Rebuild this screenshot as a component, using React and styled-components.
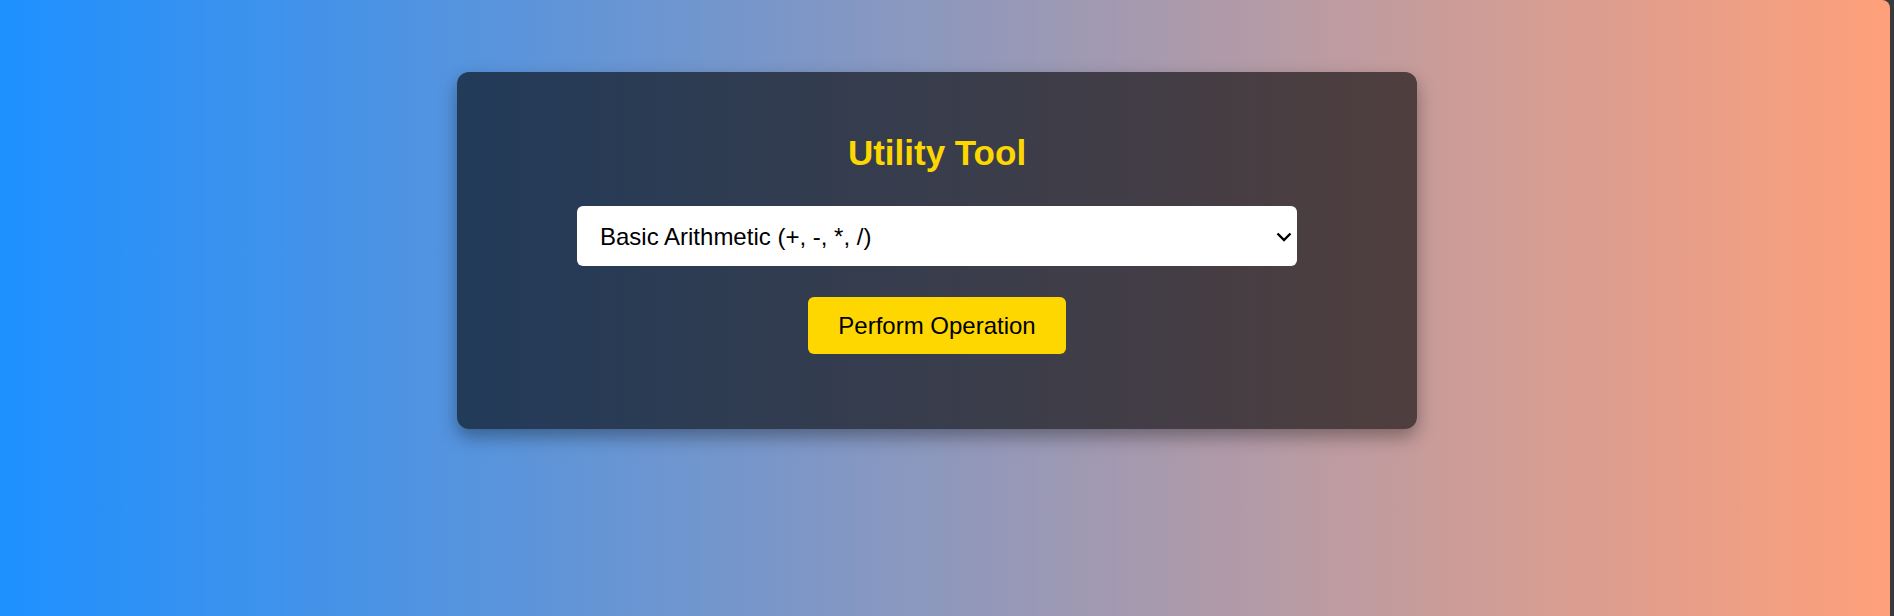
import React, { useState } from 'react'
import styled, { createGlobalStyle } from 'styled-components'

const GlobalStyle = createGlobalStyle`
  html, body {
    margin: 0;
    padding: 0;
    height: 100%;
    background: #3a3a3a;
  }
  #root {
    height: 100%;
  }
`

const Page = styled.div`
  box-sizing: border-box;
  width: calc(100% - 4px);
  min-height: 100%;
  padding: 72px 16px 0 0;
  display: flex;
  justify-content: center;
  align-items: flex-start;
  background: linear-gradient(to right, #1e90ff, #ffa07a);
  border-top-right-radius: 8px;
  font-family: 'Liberation Sans', Arial, sans-serif;
`

const Card = styled.div`
  box-sizing: border-box;
  width: 960px;
  padding: 62px 0 75px;
  display: flex;
  flex-direction: column;
  align-items: center;
  background: rgba(0, 0, 0, 0.6);
  border-radius: 12px;
  box-shadow: 0 8px 18px rgba(0, 0, 0, 0.35);
`

const Title = styled.h1`
  margin: 0 0 34px;
  font-size: 35px;
  line-height: 38px;
  font-weight: bold;
  color: #ffd700;
`

const SelectWrap = styled.div`
  position: relative;
  width: 720px;
  height: 60px;
`

const Select = styled.select`
  box-sizing: border-box;
  width: 100%;
  height: 100%;
  padding: 0 40px 0 23px;
  border: none;
  border-radius: 6px;
  background: #fff;
  color: #000;
  font-family: 'Liberation Sans', Arial, sans-serif;
  font-size: 24px;
  outline: none;
  appearance: none;
  -webkit-appearance: none;
`

const Chevron = styled.svg`
  position: absolute;
  right: 5px;
  top: 26px;
  pointer-events: none;
`

const ActionButton = styled.button`
  box-sizing: border-box;
  margin-top: 31px;
  height: 57px;
  padding: 0 30px;
  border: none;
  border-radius: 6px;
  background: #ffd700;
  color: #000;
  font-family: 'Liberation Sans', Arial, sans-serif;
  font-size: 24px;
  cursor: pointer;
`

const operations = [
  'Basic Arithmetic (+, -, *, /)',
  'Square Root',
  'Power',
  'Percentage',
]

export default function App() {
  const [op, setOp] = useState(operations[0])

  return (
    <>
      <GlobalStyle />
      <Page>
        <Card>
          <Title>Utility Tool</Title>
          <SelectWrap>
            <Select value={op} onChange={e => setOp(e.target.value)}>
              {operations.map(o => (
                <option key={o} value={o}>{o}</option>
              ))}
            </Select>
            <Chevron width="16" height="10" viewBox="0 0 16 10">
              <polyline points="1.5,1.5 8,8 14.5,1.5" fill="none" stroke="#000" strokeWidth="2.4" />
            </Chevron>
          </SelectWrap>
          <ActionButton>Perform Operation</ActionButton>
        </Card>
      </Page>
    </>
  )
}
